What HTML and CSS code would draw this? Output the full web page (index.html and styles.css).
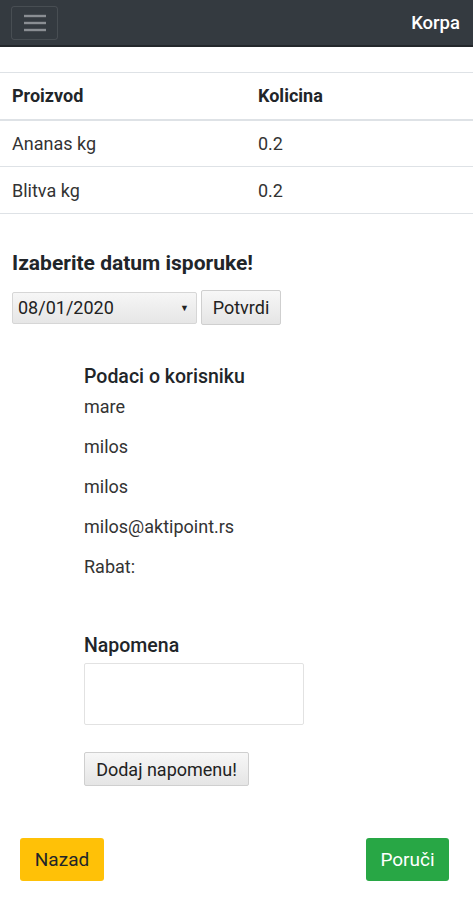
FILE: index.html
```html
<!DOCTYPE html>
<html lang="sr">
<head>
<meta charset="utf-8">
<title>Korpa</title>
<link rel="stylesheet" href="styles.css">
</head>
<body>
<nav class="navbar">
  <button class="toggler" type="button" aria-label="Menu">
    <svg width="22" height="18" viewBox="0 0 22 18"><g stroke="#8a8e93" stroke-width="2.4"><line x1="0" y1="2" x2="22" y2="2"/><line x1="0" y1="9" x2="22" y2="9"/><line x1="0" y1="16" x2="22" y2="16"/></g></svg>
  </button>
  <span class="brand">Korpa</span>
</nav>

<table class="cart">
  <thead>
    <tr><th>Proizvod</th><th>Kolicina</th></tr>
  </thead>
  <tbody>
    <tr><td>Ananas kg</td><td>0.2</td></tr>
    <tr><td>Blitva kg</td><td>0.2</td></tr>
  </tbody>
</table>

<section class="date">
  <h2 class="date-title">Izaberite datum isporuke!</h2>
  <div class="date-row">
    <div class="select"><span>08/01/2020</span><span class="arrow">▼</span></div>
    <button class="btn-grey potvrdi" type="button">Potvrdi</button>
  </div>
</section>

<section class="user">
  <h3 class="user-title">Podaci o korisniku</h3>
  <p class="line first">mare</p>
  <p class="line">milos</p>
  <p class="line">milos</p>
  <p class="line">milos@aktipoint.rs</p>
  <p class="line">Rabat:</p>

  <h3 class="note-title">Napomena</h3>
  <textarea class="note"></textarea>
  <button class="btn-grey add-note" type="button">Dodaj napomenu!</button>
</section>

<footer class="actions">
  <button class="btn btn-warning" type="button">Nazad</button>
  <button class="btn btn-success" type="button">Poruči</button>
</footer>
</body>
</html>
```

FILE: styles.css
```css
* { box-sizing: border-box; }
html, body { margin: 0; padding: 0; }
body {
  font-family: Roboto, "Liberation Sans", Arial, sans-serif;
  font-size: 18px;
  color: #212529;
  background: #fff;
  width: 473px;
}

.navbar {
  height: 47px;
  background: #343a40;
  border-bottom: 2px solid #23272b;
  display: flex;
  align-items: center;
  justify-content: space-between;
  padding: 0 13px 0 11px;
}
.toggler {
  width: 47px;
  height: 34px;
  background: transparent;
  border: 1px solid rgba(255,255,255,0.1);
  border-radius: 3px;
  display: flex;
  align-items: center;
  justify-content: center;
  padding: 0;
  margin-top: 1px;
}
.brand {
  color: #fff;
  font-size: 18.5px;
  font-weight: 500;
}

.cart {
  width: 100%;
  border-collapse: collapse;
  margin-top: 25px;
}
.cart th, .cart td {
  border-top: 1px solid #dee2e6;
  padding: 0 12px;
  height: 47px;
  text-align: left;
  vertical-align: middle;
  font-size: 18px;
}
.cart th { font-weight: 700; color: #212529; border-bottom: 2px solid #dee2e6; }
.cart td { color: #333; font-weight: 400; }
.cart th:first-child, .cart td:first-child { width: 246px; }
.cart tbody tr:last-child td { border-bottom: 1px solid #dee2e6; }

.date { padding: 35px 12px 0; }
.date-title {
  margin: 0;
  font-size: 21px;
  font-weight: 700;
  line-height: 28px;
}
.date-row {
  display: flex;
  align-items: center;
  gap: 4px;
  margin-top: 13px;
}
.select {
  width: 185px;
  height: 32px;
  display: flex;
  align-items: center;
  justify-content: space-between;
  padding: 0 7px 0 5px;
  background: linear-gradient(#f6f6f6, #e6e6e6);
  border: 1px solid #d6d6d6;
  border-radius: 2px;
  font-size: 18px;
  color: #222;
}
.arrow { font-size: 9px; color: #222; }
.btn-grey {
  font-family: inherit;
  background: linear-gradient(#f7f7f7, #e5e5e5);
  border: 1px solid #cfcfcf;
  border-radius: 2px;
  color: #222;
  font-size: 18px;
  padding: 0;
}
.potvrdi { width: 80px; height: 35px; }

.user { padding: 40px 0 0 84px; }
.user-title {
  margin: 0;
  font-size: 19.5px;
  font-weight: 500;
  line-height: 24px;
}
.line {
  margin: 0;
  font-size: 18px;
  color: #333;
  line-height: 22px;
  margin-top: 18px;
}
.line.first { margin-top: 7px; }
.note-title {
  margin: 56px 0 0;
  font-size: 19.5px;
  font-weight: 500;
  line-height: 24px;
}
.note {
  display: block;
  width: 220px;
  height: 62px;
  margin-top: 5px;
  border: 1px solid #e2e2e2;
  border-radius: 2px;
  resize: none;
}
.add-note {
  display: block;
  margin-top: 27px;
  width: 165px;
  height: 34px;
}

.actions {
  display: flex;
  justify-content: space-between;
  padding: 52px 24px 0 20px;
}
.btn {
  font-family: inherit;
  font-size: 19px;
  border: none;
  border-radius: 3px;
  height: 43px;
  padding: 0;
}
.btn-warning { background: #ffc107; color: #212529; width: 84px; }
.btn-success { background: #28a745; color: #fff; width: 83px; }
```
